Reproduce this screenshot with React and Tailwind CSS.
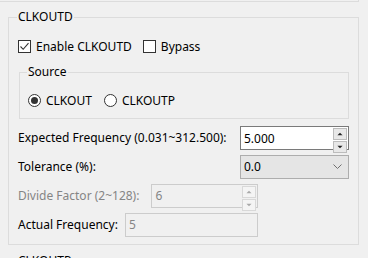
import { useState } from 'react';

const font = { fontFamily: '"Noto Sans", "Open Sans", sans-serif' };

const Check = ({ checked, label }) => (
  <label className="flex items-center gap-[5px]">
    <span className="flex h-[13px] w-[13px] items-center justify-center border border-[#333] bg-white">
      {checked && (
        <svg width="11" height="11" viewBox="0 0 11 11">
          <path d="M1.5 5.5 L4.2 8.3 L9.5 2.2" fill="none" stroke="#333" strokeWidth="1.1" />
        </svg>
      )}
    </span>
    <span>{label}</span>
  </label>
);

const Radio = ({ checked, label }) => (
  <label className="flex items-center gap-[5px]">
    <span className="flex h-[13px] w-[13px] items-center justify-center rounded-full border border-[#333] bg-white">
      {checked && <span className="h-[7px] w-[7px] rounded-full bg-[#333]" />}
    </span>
    <span>{label}</span>
  </label>
);

const SpinButtons = ({ disabled }) => (
  <div className="flex h-full w-[15px] flex-col gap-px py-px pr-px">
    {['M4 6.5 L7 3.5 L10 6.5 Z', 'M4 3.5 L7 6.5 L10 3.5 Z'].map((d) => (
      <div key={d} className={`flex flex-1 items-center justify-center border ${disabled ? 'border-[#d8d8d8] bg-[#f4f4f4]' : 'border-[#bcbcbc] bg-[#e8e8e8]'}`}>
        <svg width="14" height="10" viewBox="0 0 14 10">
          <path d={d} fill={disabled ? '#a8a8a8' : '#222'} />
        </svg>
      </div>
    ))}
  </div>
);

export default function App() {
  const [freq, setFreq] = useState('5.000');

  return (
    <div className="h-[258px] w-[368px] overflow-hidden bg-[#f0f0f0] text-[12px] text-black" style={font}>
      <div className="h-[2px] w-[359px] border-b border-r border-[#dcdcdc]" />

      {/* CLKOUTD group */}
      <fieldset className="ml-[8px] mt-[7px] w-[351px] border border-[#dcdcdc]">
        <legend className="ml-[8px] px-[1px] leading-[16px]">CLKOUTD</legend>

        <div className="pb-[7px] pl-[9px] pr-[9px]">
          <div className="mt-[15px] flex h-[13px] items-center gap-[11px]">
            <Check checked label="Enable CLKOUTD" />
            <Check label="Bypass" />
          </div>

          <fieldset className="ml-[1px] mt-[11px] w-[330px] border border-[#dcdcdc]">
            <legend className="ml-[7px] px-[1px] leading-[16px]">Source</legend>
            <div className="mt-[14px] flex h-[13px] items-center gap-[12px] pl-[8px]">
              <Radio checked label="CLKOUT" />
              <Radio label="CLKOUTP" />
            </div>
            <div className="h-[11px]" />
          </fieldset>

          <div className="mt-[7px] flex w-[331px] items-center justify-between">
            <span>Expected Frequency (0.031~312.500):</span>
            <div className="flex h-[24px] w-[109px] items-center border border-[#7a7a7a] bg-white">
              <input
                value={freq}
                onChange={(e) => setFreq(e.target.value)}
                className="h-full min-w-0 flex-1 bg-transparent pl-[3px] outline-none"
              />
              <SpinButtons />
            </div>
          </div>

          <div className="mt-[5px] flex w-[331px] items-center justify-between">
            <span>Tolerance (%):</span>
            <div className="flex h-[24px] w-[109px] items-center justify-between border border-[#adadad] bg-[#e5e5e5] pl-[3px] pr-[6px]">
              <span>0.0</span>
              <svg width="9" height="6" viewBox="0 0 9 6">
                <path d="M0.5 0.5 L4.5 4.5 L8.5 0.5" fill="none" stroke="#707070" strokeWidth="1" />
              </svg>
            </div>
          </div>

          <div className="mt-[5px] flex w-[240px] items-center gap-[12px] text-[#858585]">
            <span>Divide Factor (2~128):</span>
            <div className="flex h-[24px] min-w-0 flex-1 items-center border border-[#cccccc] bg-[#f0f0f0]">
              <span className="flex-1 pl-[3px]">6</span>
              <SpinButtons disabled />
            </div>
          </div>

          <div className="mt-[5px] flex w-[240px] items-center gap-[7px]">
            <span>Actual Frequency:</span>
            <div className="flex h-[24px] min-w-0 flex-1 items-center border border-[#cccccc] bg-[#f0f0f0] pl-[3px] text-[#858585]">
              5
            </div>
          </div>
        </div>
      </fieldset>

      {/* next group, cut off by the window */}
      <fieldset className="ml-[8px] mt-[8px] w-[351px] border border-[#dcdcdc]">
        <legend className="ml-[8px] px-[1px] leading-[16px]">CLKOUTP</legend>
        <div className="h-[40px]" />
      </fieldset>
    </div>
  );
}
